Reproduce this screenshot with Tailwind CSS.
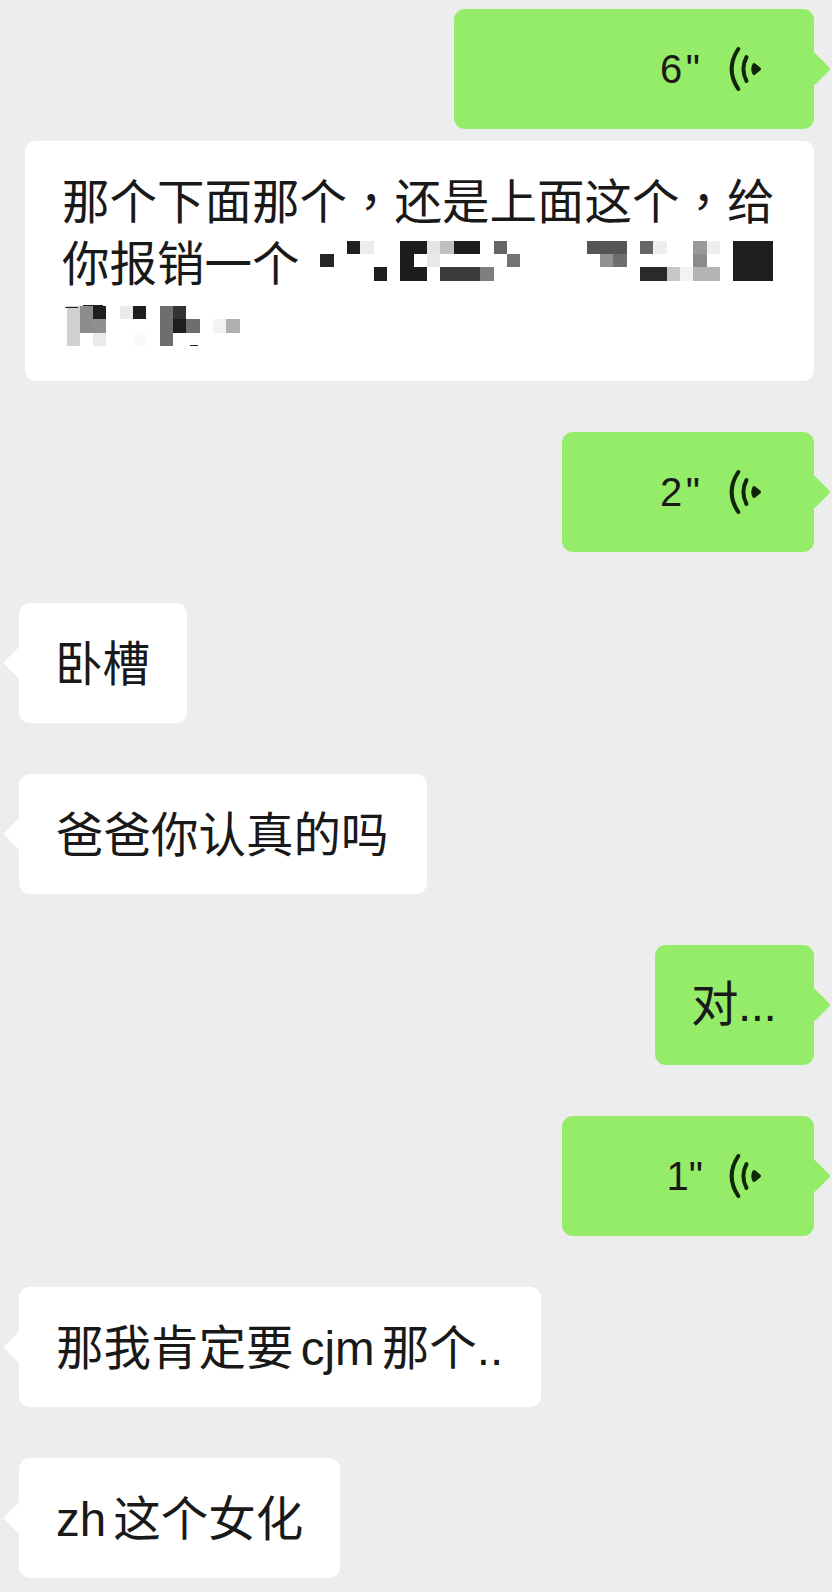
<!DOCTYPE html>
<html lang="zh-CN">
<head>
    <meta charset="UTF-8">
    <meta name="viewport" content="width=device-width, initial-scale=1.0">
    <title>Chat</title>
    <script src="https://cdn.jsdelivr.net/npm/@tailwindcss/browser@4"></script>
</head>
<body class="bg-[#ededed] w-[832px] h-[1592px] overflow-hidden text-[#191919] text-[47.5px] leading-[62px] font-['Liberation_Sans','Noto_Sans_CJK_SC',sans-serif]">
    <main class="flex flex-col pt-[9px]">

        <!-- voice 6" -->
        <div class="relative self-end mr-[18px] w-[360px] h-[120px] rounded-[11px] bg-[#95ec69] flex items-center justify-end">
            <span class="text-[40px] tracking-[3.5px] mr-[24.5px]">6"</span>
            <svg class="mr-[50px]" width="36" height="46" viewBox="0 0 36 46" fill="none" stroke="#0f2608" stroke-linecap="round">
                <path d="M10.3 3 Q-3 23 10.3 43" stroke-width="4"/>
                <path d="M18.5 11 Q12.3 23 18.5 35" stroke-width="4"/>
                <path d="M26 18.5 L31.5 23 L26 27.5 Q23.5 23 26 18.5 Z" fill="#0f2608" stroke-width="3" stroke-linejoin="round"/>
            </svg>
            <span class="absolute right-[-12px] top-[48px] w-[24px] h-[24px] rotate-45 rounded-[3px] bg-[#95ec69]"></span>
        </div>

        <!-- long text with mosaic -->
        <div class="ml-[25px] mt-[12px] w-[789px] h-[240px] rounded-[11px] bg-white pl-[37px] pt-[27px]">
            <div class="h-[62px] whitespace-nowrap">那个下面那个<span class="font-['Noto_Sans_CJK_TC',sans-serif]" lang="zh-TW">，</span>还是上面这个<span class="font-['Noto_Sans_CJK_TC',sans-serif]" lang="zh-TW">，</span>给</div>
            <div class="h-[62px] flex items-center whitespace-nowrap">
                <span class="mt-[8px]">你报销一个</span>
                <svg class="ml-[20px]" width="454" height="40" viewBox="319 240 454 40" shape-rendering="crispEdges">
                    <rect x="346" y="240" width="13" height="13" fill="#1f1f1f"/>
                    <rect x="359" y="240" width="14" height="13" fill="#ececec"/>
                    <rect x="319" y="253" width="14" height="13" fill="#262626"/>
                    <rect x="373" y="266" width="13" height="14" fill="#1e1e1e"/>
                    <rect x="399" y="240" width="27" height="13" fill="#1c1c1c"/>
                    <rect x="399" y="253" width="14" height="13" fill="#1c1c1c"/>
                    <rect x="399" y="266" width="27" height="14" fill="#1c1c1c"/>
                    <rect x="426" y="240" width="13" height="13" fill="#e4e4e4"/>
                    <rect x="426" y="253" width="13" height="13" fill="#e8e8e8"/>
                    <rect x="439" y="240" width="14" height="13" fill="#c0c0c0"/>
                    <rect x="453" y="240" width="26" height="13" fill="#1d1d1d"/>
                    <rect x="439" y="266" width="40" height="14" fill="#3c3c3c"/>
                    <rect x="479" y="266" width="14" height="14" fill="#7e7e7e"/>
                    <rect x="493" y="240" width="13" height="13" fill="#666666"/>
                    <rect x="506" y="253" width="13" height="13" fill="#737373"/>
                    <rect x="586" y="240" width="40" height="13" fill="#555555"/>
                    <rect x="599" y="253" width="13" height="13" fill="#919191"/>
                    <rect x="612" y="253" width="14" height="13" fill="#6e6e6e"/>
                    <rect x="639" y="240" width="13" height="13" fill="#666666"/>
                    <rect x="652" y="240" width="14" height="13" fill="#eeeeee"/>
                    <rect x="639" y="266" width="27" height="14" fill="#2a2a2a"/>
                    <rect x="666" y="266" width="13" height="14" fill="#c8c8c8"/>
                    <rect x="679" y="266" width="13" height="14" fill="#f3f3f3"/>
                    <rect x="692" y="240" width="14" height="13" fill="#999999"/>
                    <rect x="692" y="253" width="14" height="13" fill="#8c8c8c"/>
                    <rect x="692" y="266" width="27" height="14" fill="#b3b3b3"/>
                    <rect x="706" y="240" width="13" height="13" fill="#eeeeee"/>
                    <rect x="732" y="240" width="40" height="40" fill="#1e1e1e"/>
                </svg>
            </div>
            <svg class="mt-[12px]" width="200" height="44" viewBox="62 304 200 44" shape-rendering="crispEdges">
                <rect x="67" y="306" width="13" height="40" fill="#d0d0d0"/>
                <rect x="80" y="306" width="13" height="27" fill="#8c8c8c"/>
                <rect x="93" y="306" width="13" height="13" fill="#1e1e1e"/>
                <rect x="93" y="319" width="13" height="14" fill="#8f8f8f"/>
                <rect x="93" y="333" width="13" height="13" fill="#eaeaea"/>
                <rect x="65" y="307" width="13" height="1" fill="#222222"/>
                <rect x="83" y="305" width="20" height="1" fill="#222222"/>
                <rect x="120" y="306" width="13" height="13" fill="#eaeaea"/>
                <rect x="133" y="306" width="13" height="13" fill="#1e1e1e"/>
                <rect x="133" y="333" width="13" height="13" fill="#fafafa"/>
                <rect x="160" y="306" width="13" height="40" fill="#6e6e6e"/>
                <rect x="173" y="306" width="13" height="13" fill="#333333"/>
                <rect x="173" y="319" width="13" height="14" fill="#1e1e1e"/>
                <rect x="186" y="319" width="14" height="14" fill="#6e6e6e"/>
                <rect x="190" y="345" width="8" height="1" fill="#222222"/>
                <rect x="213" y="319" width="13" height="14" fill="#f3f3f3"/>
                <rect x="226" y="319" width="14" height="14" fill="#b0b0b0"/>
            </svg>
        </div>

        <!-- voice 2" -->
        <div class="relative self-end mr-[18px] mt-[51px] w-[252px] h-[120px] rounded-[11px] bg-[#95ec69] flex items-center justify-end">
            <span class="text-[40px] tracking-[3.5px] mr-[24.5px]">2"</span>
            <svg class="mr-[50px]" width="36" height="46" viewBox="0 0 36 46" fill="none" stroke="#0f2608" stroke-linecap="round">
                <path d="M10.3 3 Q-3 23 10.3 43" stroke-width="4"/>
                <path d="M18.5 11 Q12.3 23 18.5 35" stroke-width="4"/>
                <path d="M26 18.5 L31.5 23 L26 27.5 Q23.5 23 26 18.5 Z" fill="#0f2608" stroke-width="3" stroke-linejoin="round"/>
            </svg>
            <span class="absolute right-[-12px] top-[48px] w-[24px] h-[24px] rotate-45 rounded-[3px] bg-[#95ec69]"></span>
        </div>

        <div class="relative self-start ml-[19px] mt-[51px] w-[168px] h-[120px] rounded-[11px] bg-white pl-[36px] pt-[4px] flex items-center whitespace-nowrap">
            卧槽
            <span class="absolute left-[-11px] top-[48px] w-[24px] h-[24px] rotate-45 rounded-[3px] bg-white"></span>
        </div>

        <div class="relative self-start ml-[19px] mt-[51px] w-[408px] h-[120px] rounded-[11px] bg-white pl-[37px] pt-[4px] flex items-center whitespace-nowrap">
            爸爸你认真的吗
            <span class="absolute left-[-11px] top-[48px] w-[24px] h-[24px] rotate-45 rounded-[3px] bg-white"></span>
        </div>

        <div class="relative self-end mr-[18px] mt-[51px] w-[159px] h-[120px] rounded-[11px] bg-[#95ec69] pl-[36px] flex items-center whitespace-nowrap tracking-[-0.5px]">
            对...
            <span class="absolute right-[-12px] top-[48px] w-[24px] h-[24px] rotate-45 rounded-[3px] bg-[#95ec69]"></span>
        </div>

        <!-- voice 1" -->
        <div class="relative self-end mr-[18px] mt-[51px] w-[252px] h-[120px] rounded-[11px] bg-[#95ec69] flex items-center justify-end">
            <span class="text-[40px] mr-[25px]">1"</span>
            <svg class="mr-[50px]" width="36" height="46" viewBox="0 0 36 46" fill="none" stroke="#0f2608" stroke-linecap="round">
                <path d="M10.3 3 Q-3 23 10.3 43" stroke-width="4"/>
                <path d="M18.5 11 Q12.3 23 18.5 35" stroke-width="4"/>
                <path d="M26 18.5 L31.5 23 L26 27.5 Q23.5 23 26 18.5 Z" fill="#0f2608" stroke-width="3" stroke-linejoin="round"/>
            </svg>
            <span class="absolute right-[-12px] top-[48px] w-[24px] h-[24px] rotate-45 rounded-[3px] bg-[#95ec69]"></span>
        </div>

        <div class="relative self-start ml-[19px] mt-[51px] w-[522px] h-[120px] rounded-[11px] bg-white pl-[37px] pt-[4px] flex items-center whitespace-pre [word-spacing:-6px]">那我肯定要 cjm 那个..<span class="absolute left-[-11px] top-[48px] w-[24px] h-[24px] rotate-45 rounded-[3px] bg-white"></span></div>

        <div class="relative self-start ml-[19px] mt-[51px] w-[321px] h-[120px] rounded-[11px] bg-white pl-[37px] pt-[4px] flex items-center whitespace-pre [word-spacing:-6px]">zh 这个女化<span class="absolute left-[-11px] top-[48px] w-[24px] h-[24px] rotate-45 rounded-[3px] bg-white"></span></div>

    </main>
</body>
</html>
